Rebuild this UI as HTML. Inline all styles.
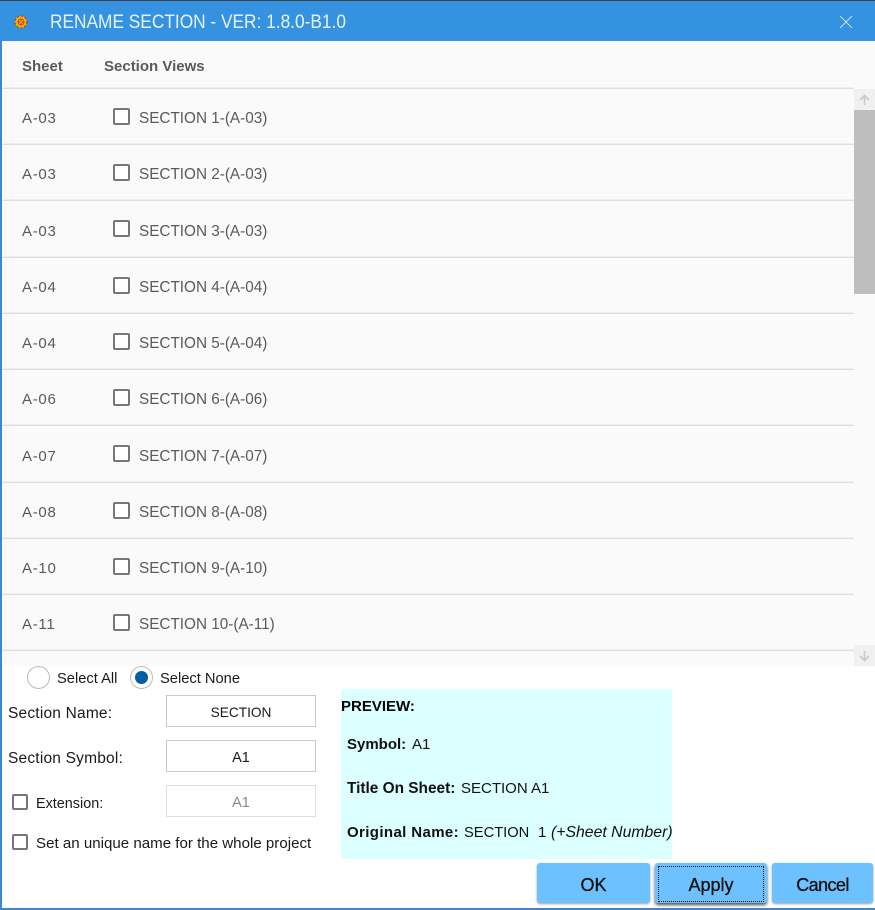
<!DOCTYPE html>
<html><head><meta charset="utf-8">
<style>
html,body{margin:0;padding:0;background:#fff}
#w{position:relative;width:875px;height:910px;overflow:hidden;background:#fff;font-family:"Liberation Sans",sans-serif;font-size:15px;color:#1a1a1a}
#w div{position:absolute}
.t{white-space:nowrap;line-height:20px;height:20px}
.g{color:#5a5a5a}
.s{font-size:15.3px}
.sh{letter-spacing:.7px;left:22px}
.ln{left:2px;width:852px;height:1px;background:#dedede;box-shadow:0 -1px 0 #eeeeee}
.cb{width:13px;height:13px;border:2px solid #777;border-radius:2px;background:#fff}
.cs{width:12px;height:12px}
.in{width:148px;height:30px;border:1px solid #c8c8c8;text-align:center;line-height:34px;background:#fff}
.btn{top:863px;height:40px;background:#6cc1fe;border-radius:3px;box-shadow:0 1px 2px rgba(0,0,0,.4);text-align:center;line-height:44px;font-size:18px;color:#111;-webkit-text-stroke:.3px #111}
.b{font-weight:bold}
.rd{width:21px;height:21px;border:1px solid #bbb;border-radius:50%;background:#fff;top:666px}
</style></head><body>
<div id="w">
<div style="left:0;top:0;width:875px;height:1px;background:#3a4048"></div>
<div style="left:0;top:1px;width:875px;height:40px;background:#3592e0"></div>
<div style="left:0;top:41px;width:2px;height:869px;background:#3a88cf"></div>
<div style="left:0;top:908px;width:875px;height:2px;background:#3a88cf"></div>
<div style="left:2px;top:41px;width:873px;height:625px;background:#fafafa"></div>

<svg style="position:absolute;left:14px;top:15px" width="14" height="14" viewBox="0 0 14 14"><circle cx="7" cy="7" r="6" fill="#e8b010"/><circle cx="7" cy="7" r="6" fill="none" stroke="#a83018" stroke-width="1" stroke-dasharray="2 2"/><circle cx="7" cy="7" r="3.4" fill="#d83a10"/><path d="M5 5l4 4M9 5l-4 4" stroke="#f0c020" stroke-width="1"/></svg>
<div class="t" style="left:50px;top:12px;font-size:19px;color:#e6f3fd;line-height:22px;height:22px;transform:scaleX(.91);transform-origin:0 0">RENAME SECTION - VER: 1.8.0-B1.0</div>
<svg style="position:absolute;left:839px;top:15px" width="14" height="14" viewBox="0 0 14 14"><path d="M1 1l12 12M13 1L1 13" stroke="#f2f8fd" stroke-width=".8"/></svg>

<div class="t b g" style="left:22px;top:57px">Sheet</div>
<div class="t b g" style="left:104px;top:57px">Section Views</div>

<div class="ln" style="top:88px"></div>
<div class="t g sh" style="top:109px">A-03</div><div class="cb" style="left:113px;top:108px"></div><div class="t g s" style="left:139px;top:109px">SECTION 1-(A-03)</div>
<div class="ln" style="top:144px"></div>
<div class="t g sh" style="top:165px">A-03</div><div class="cb" style="left:113px;top:164px"></div><div class="t g s" style="left:139px;top:165px">SECTION 2-(A-03)</div>
<div class="ln" style="top:200px"></div>
<div class="t g sh" style="top:222px">A-03</div><div class="cb" style="left:113px;top:220px"></div><div class="t g s" style="left:139px;top:222px">SECTION 3-(A-03)</div>
<div class="ln" style="top:257px"></div>
<div class="t g sh" style="top:278px">A-04</div><div class="cb" style="left:113px;top:277px"></div><div class="t g s" style="left:139px;top:278px">SECTION 4-(A-04)</div>
<div class="ln" style="top:313px"></div>
<div class="t g sh" style="top:334px">A-04</div><div class="cb" style="left:113px;top:333px"></div><div class="t g s" style="left:139px;top:334px">SECTION 5-(A-04)</div>
<div class="ln" style="top:369px"></div>
<div class="t g sh" style="top:390px">A-06</div><div class="cb" style="left:113px;top:389px"></div><div class="t g s" style="left:139px;top:390px">SECTION 6-(A-06)</div>
<div class="ln" style="top:425px"></div>
<div class="t g sh" style="top:447px">A-07</div><div class="cb" style="left:113px;top:445px"></div><div class="t g s" style="left:139px;top:447px">SECTION 7-(A-07)</div>
<div class="ln" style="top:482px"></div>
<div class="t g sh" style="top:503px">A-08</div><div class="cb" style="left:113px;top:502px"></div><div class="t g s" style="left:139px;top:503px">SECTION 8-(A-08)</div>
<div class="ln" style="top:538px"></div>
<div class="t g sh" style="top:559px">A-10</div><div class="cb" style="left:113px;top:558px"></div><div class="t g s" style="left:139px;top:559px">SECTION 9-(A-10)</div>
<div class="ln" style="top:594px"></div>
<div class="t g sh" style="top:615px">A-11</div><div class="cb" style="left:113px;top:614px"></div><div class="t g s" style="left:139px;top:615px">SECTION 10-(A-11)</div>
<div class="ln" style="top:650px"></div>

<div style="left:854px;top:89px;width:21px;height:21px;background:#f0f0f0"></div>
<svg style="position:absolute;left:858px;top:94px" width="13" height="12" viewBox="0 0 13 12"><path d="M6.500 11V2M2 6l4.500-4.500L11 6" fill="none" stroke="#c9c9c9" stroke-width="1.600"/></svg>
<div style="left:854px;top:110px;width:21px;height:184px;background:#bebebe"></div>
<div style="left:854px;top:645px;width:21px;height:21px;background:#f0f0f0"></div>
<svg style="position:absolute;left:858px;top:650px" width="13" height="12" viewBox="0 0 13 12"><path d="M6.500 1v9M2 6l4.500 4.500L11 6" fill="none" stroke="#c9c9c9" stroke-width="1.600"/></svg>

<div class="rd" style="left:27px"></div>
<div class="t" style="left:57px;top:669px;font-size:14.700px">Select All</div>
<div class="rd" style="left:130px"></div>
<div style="left:135px;top:671px;width:13px;height:13px;border-radius:50%;background:#035ea6"></div>
<div class="t" style="left:160px;top:669px;font-size:14.700px">Select None</div>

<div class="t" style="left:8px;top:704px;font-size:15.500px;letter-spacing:.2px">Section Name:</div>
<div class="in" style="left:166px;top:695px;font-size:13.700px">SECTION</div>
<div class="t" style="left:8px;top:749px;font-size:15.500px;letter-spacing:.2px">Section Symbol:</div>
<div class="in" style="left:166px;top:740px;font-size:14.500px">A1</div>
<div class="cb cs" style="left:12px;top:794px"></div>
<div class="t" style="left:36px;top:794px;font-size:14.400px">Extension:</div>
<div class="in" style="left:166px;top:785px;font-size:14.500px;color:#888;border-color:#ddd">A1</div>
<div class="cb cs" style="left:12px;top:834px"></div>
<div class="t" style="left:36px;top:834px;font-size:15.100px">Set an unique name for the whole project</div>

<div style="left:341px;top:689px;width:331px;height:170px;background:#dcffff"></div>
<div class="t b" style="left:341px;top:697px;color:#000">PREVIEW:</div>
<div class="t b" style="left:347px;top:735px;color:#111">Symbol:</div>
<div class="t" style="left:412px;top:735px;color:#111">A1</div>
<div class="t b" style="left:347px;top:779px;color:#111;font-size:15.400px">Title On Sheet:</div>
<div class="t" style="left:461px;top:779px;color:#111">SECTION A1</div>
<div class="t b" style="left:347px;top:823px;color:#111;letter-spacing:.38px">Original Name:</div>
<div class="t" style="left:464px;top:823px;color:#111;font-size:14.700px">SECTION</div>
<div class="t" style="left:538px;top:823px;color:#111">1</div>
<div class="t" style="left:551px;top:823px;color:#111;font-size:15.800px"><i>(+Sheet Number)</i></div>

<div class="btn" style="left:537px;width:113px">OK</div>
<div class="btn" style="left:655px;width:112px;box-shadow:0 2px 3px rgba(0,0,0,.7)">Apply</div>
<div style="left:658px;top:866px;width:104px;height:34px;border:1px dotted #111"></div>
<div class="btn" style="left:772px;width:101px;letter-spacing:-.6px">Cancel</div>
</div>
</body></html>
